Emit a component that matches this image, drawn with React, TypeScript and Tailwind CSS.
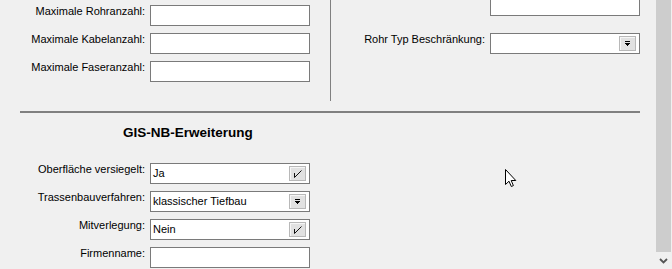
import React from 'react';

function CheckGlyph() {
  return (
    <svg width="9" height="9" viewBox="0 0 9 9" className="block">
      <path d="M1.5 4 V8.5 L8.5 1.5" fill="none" stroke="#111" strokeWidth="1" />
    </svg>
  );
}

function ArrowGlyph() {
  return (
    <svg width="7" height="6" viewBox="0 0 7 6" className="block" shapeRendering="crispEdges">
      <rect x="1" y="0" width="5" height="1" fill="#000" />
      <rect x="1" y="2" width="5" height="1" fill="#000" />
      <rect x="2" y="3" width="3" height="1" fill="#000" />
      <rect x="3" y="4" width="1" height="1" fill="#000" />
    </svg>
  );
}

function Field({ w = 160, className = '' }: { w?: number; className?: string }) {
  return (
    <div
      className={`h-[21px] border border-[#7a7a7a] bg-white ${className}`}
      style={{ width: w }}
    />
  );
}

function Combo({ value, kind, w = 160 }: { value?: string; kind: 'check' | 'arrow'; w?: number }) {
  return (
    <div
      className="h-[21px] border border-[#7a7a7a] bg-white flex items-center pl-[2px] pr-[3px]"
      style={{ width: w }}
    >
      <span className="flex-1 text-[11px] leading-[13px] text-black whitespace-nowrap">{value}</span>
      <div className="w-[17px] h-[15px] border border-[#b8b8b8] bg-[#e1e1e1] shadow-[inset_1px_1px_0_#f6f6f6] flex items-center justify-center">
        {kind === 'check' ? <CheckGlyph /> : <ArrowGlyph />}
      </div>
    </div>
  );
}

function Row({ label, children }: { label: string; children: React.ReactNode }) {
  return (
    <div className="flex items-start">
      <div className="w-[145px] text-right text-[11px] leading-[13px] text-black whitespace-nowrap">{label}</div>
      <div className="ml-[5px]">{children}</div>
    </div>
  );
}

export default function App() {
  return (
    <div className="relative flex h-[269px] w-[672px] overflow-hidden bg-[#f0f0f0] font-['Liberation_Sans',Arial,sans-serif]">
      {/* Content */}
      <div className="w-[655px] flex flex-col">
        {/* Top section */}
        <div className="flex h-[111px]">
          <div className="w-[330px] pt-[5px] flex flex-col gap-[7px]">
            <Row label="Maximale Rohranzahl:"><Field /></Row>
            <Row label="Maximale Kabelanzahl:"><Field /></Row>
            <Row label="Maximale Faseranzahl:"><Field /></Row>
          </div>
          <div className="w-px h-[101px] bg-[#808080]" />
          <div className="flex-1 pr-[15px] flex flex-col items-end">
            <Field w={150} className="-mt-[5px]" />
            <div className="mt-[17px] flex items-start">
              <div className="text-right text-[11px] leading-[13px] text-black whitespace-nowrap">Rohr Typ Beschränkung:</div>
              <div className="ml-[5px]"><Combo kind="arrow" w={150} /></div>
            </div>
          </div>
        </div>

        {/* Separator */}
        <div className="ml-[20px] w-[620px] h-[2px] bg-[#808080]" />

        {/* GIS-NB section */}
        <div className="mt-[12px] pl-[123px] text-[13.5px] leading-[16px] font-bold text-black">GIS-NB-Erweiterung</div>
        <div className="mt-[22px] flex flex-col gap-[7px]">
          <Row label="Oberfläche versiegelt:"><Combo value="Ja" kind="check" /></Row>
          <Row label="Trassenbauverfahren:"><Combo value="klassischer Tiefbau" kind="arrow" /></Row>
          <Row label="Mitverlegung:"><Combo value="Nein" kind="check" /></Row>
          <Row label="Firmenname:"><Field /></Row>
        </div>
      </div>

      {/* Scrollbar */}
      <div className="w-[17px] h-full flex flex-col">
        <div className="ml-px w-[15px] h-[252px] bg-[#cdcdcd]" />
        <div className="flex-1 flex items-center justify-center">
          <svg width="9" height="6" viewBox="0 0 9 6">
            <path d="M1 1 L4.5 4.5 L8 1" fill="none" stroke="#555" strokeWidth="1.8" />
          </svg>
        </div>
      </div>

      {/* Mouse cursor */}
      <svg className="absolute left-[505px] top-[169px]" width="12" height="19" viewBox="0 0 12 19">
        <path
          d="M0.5 0.5 L0.5 15.5 L4 12.2 L6.3 17.5 L8.4 16.6 L6.2 11.5 L10.8 11.5 Z"
          fill="#fff"
          stroke="#000"
          strokeWidth="1"
        />
      </svg>
    </div>
  );
}
